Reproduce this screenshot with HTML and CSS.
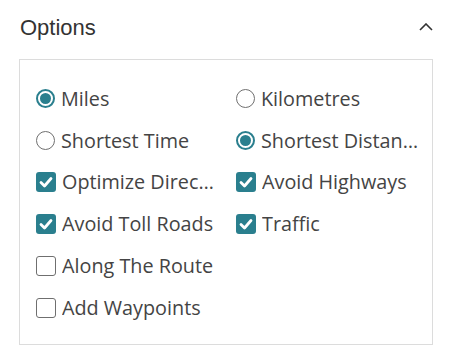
FILE: index.html
```html
<!DOCTYPE html>
<html>
<head>
<meta charset="utf-8">
<link rel="stylesheet" href="styles.css">
</head>
<body>
<div class="panel">
  <div class="header">
    <span class="title">Options</span>
    <svg class="chev" width="14" height="8" viewBox="0 0 14 8"><path d="M1 7 L7 1 L13 7" fill="none" stroke="#333" stroke-width="1.6"/></svg>
  </div>
  <div class="box">
    <div class="grid">
      <label class="opt"><span class="radio on"></span><span class="txt">Miles</span></label>
      <label class="opt"><span class="radio"></span><span class="txt">Kilometres</span></label>
      <label class="opt"><span class="radio"></span><span class="txt">Shortest Time</span></label>
      <label class="opt"><span class="radio on"></span><span class="txt">Shortest Distance</span></label>
      <label class="opt"><span class="check on"><svg viewBox="0 0 20 20"><path d="M5 10.5 L8.5 14 L15 6.5" fill="none" stroke="#fff" stroke-width="2.8" stroke-linecap="round" stroke-linejoin="round"/></svg></span><span class="txt">Optimize Directions</span></label>
      <label class="opt"><span class="check on"><svg viewBox="0 0 20 20"><path d="M5 10.5 L8.5 14 L15 6.5" fill="none" stroke="#fff" stroke-width="2.8" stroke-linecap="round" stroke-linejoin="round"/></svg></span><span class="txt">Avoid Highways</span></label>
      <label class="opt"><span class="check on"><svg viewBox="0 0 20 20"><path d="M5 10.5 L8.5 14 L15 6.5" fill="none" stroke="#fff" stroke-width="2.8" stroke-linecap="round" stroke-linejoin="round"/></svg></span><span class="txt">Avoid Toll Roads</span></label>
      <label class="opt"><span class="check on"><svg viewBox="0 0 20 20"><path d="M5 10.5 L8.5 14 L15 6.5" fill="none" stroke="#fff" stroke-width="2.8" stroke-linecap="round" stroke-linejoin="round"/></svg></span><span class="txt">Traffic</span></label>
      <label class="opt"><span class="check"></span><span class="txt">Along The Route</span></label>
      <div></div>
      <label class="opt"><span class="check"></span><span class="txt">Add Waypoints</span></label>
    </div>
  </div>
</div>
</body>
</html>
```
FILE: styles.css
```css
html, body { margin: 0; padding: 0; background: #fff; }
.panel { width: 414px; padding: 0 0 0 19px; }
.header {
  display: flex; justify-content: space-between; align-items: center;
  height: 56px; padding: 0 0 0 1px; box-sizing: border-box;
}
.title {
  font-family: "Liberation Sans", Arial, sans-serif;
  font-size: 22px; color: #333; line-height: 56px;
}
.chev { margin-top: -3px; }
.box {
  margin-top: 3px;
  border: 1px solid #dcdcdc;
  height: 286px; box-sizing: border-box;
  padding: 18px 10px 0 16px;
}
.grid {
  display: grid;
  grid-template-columns: 180px 186px;
  column-gap: 20px;
  grid-auto-rows: 41.8px;
}
.opt {
  display: flex; align-items: center; gap: 6px; min-width: 0;
  font-family: "Open Sans", "Noto Sans", sans-serif;
  font-size: 19.8px; color: #444;
}
.txt { white-space: nowrap; overflow: hidden; text-overflow: ellipsis; min-width: 0; line-height: 28px; }
.radio {
  flex: none; width: 19px; height: 19px; box-sizing: border-box;
  border: 1.5px solid #6f6f6f; border-radius: 50%; background: #fff; position: relative;
}
.radio.on { border: 2px solid #2a7f8e; }
.radio.on::after {
  content: ""; position: absolute; left: 2px; top: 2px; width: 11px; height: 11px;
  border-radius: 50%; background: #2a7f8e;
}
.check {
  flex: none; width: 20px; height: 20px; box-sizing: border-box;
  border: 1.5px solid #6f6f6f; border-radius: 3px; background: #fff;
}
.check.on { border: none; background: #2a7f8e; }
.check svg { display: block; width: 20px; height: 20px; }
```
